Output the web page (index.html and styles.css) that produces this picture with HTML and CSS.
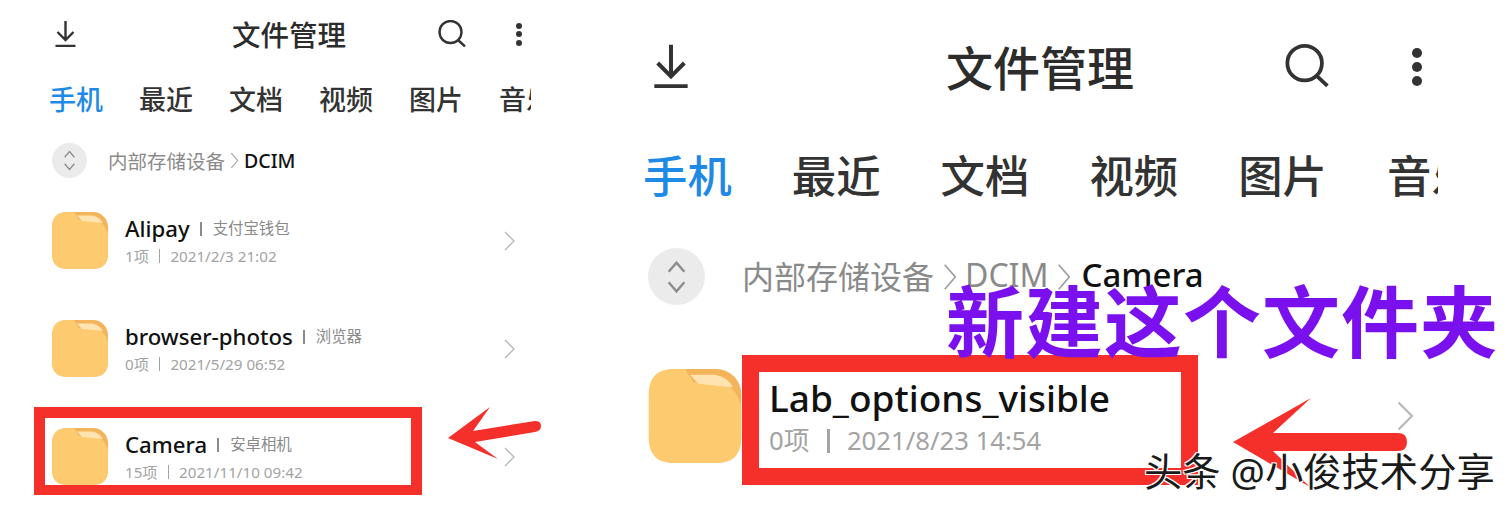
FILE: index.html
```html
<!DOCTYPE html>
<html lang="zh-CN">
<head>
  <meta charset="UTF-8" />
  <title>文件管理</title>
  <link rel="stylesheet" href="styles.css">
</head>
<body>
  <div class="page">
    <!-- left phone shot -->
    <section class="panel panel-small">
      <header class="top">
        <svg class="icon-download" viewBox="0 0 20 27"><path d="M10 1v18M2 12l8 8 8-8M0 26h20"/></svg>
        <h1 class="title">文件管理</h1>
        <svg class="icon-search" viewBox="0 0 28 27"><circle cx="12.5" cy="12" r="11"/><path d="M20 20l7 6.5"/></svg>
        <div class="dots"><i></i><i></i><i></i></div>
      </header>
      <nav class="tabs">
        <span class="tab active">手机</span><span class="tab">最近</span><span class="tab">文档</span><span class="tab">视频</span><span class="tab">图片</span><span class="tab">音乐</span>
      </nav>
      <div class="crumbs">
        <span class="crumb-btn"><svg viewBox="0 0 16 26"><path d="M2 9l6-7 6 7M2 17l6 7 6-7"/></svg></span>
        <span class="crumb">内部存储设备</span>
        <svg class="crumb-sep" viewBox="0 0 8 16"><path d="M1 1l6 7-6 7"/></svg>
        <span class="crumb-now">DCIM</span>
      </div>
      <ul class="rows">
        <li class="row">
          <svg class="folder" viewBox="0 0 56 57"><use href="#folder-shape"/></svg>
          <div class="info">
            <div class="name">Alipay<span class="bar"></span><span class="alias">支付宝钱包</span></div>
            <div class="meta">1项<span class="bar"></span>2021/2/3 21:02</div>
          </div>
          <svg class="chevron" viewBox="0 0 12 20"><path d="M1 1l9 9-9 9"/></svg>
        </li>
        <li class="row">
          <svg class="folder" viewBox="0 0 56 57"><use href="#folder-shape"/></svg>
          <div class="info">
            <div class="name">browser-photos<span class="bar"></span><span class="alias">浏览器</span></div>
            <div class="meta">0项<span class="bar"></span>2021/5/29 06:52</div>
          </div>
          <svg class="chevron" viewBox="0 0 12 20"><path d="M1 1l9 9-9 9"/></svg>
        </li>
        <li class="row">
          <svg class="folder" viewBox="0 0 56 57"><use href="#folder-shape"/></svg>
          <div class="info">
            <div class="name">Camera<span class="bar"></span><span class="alias">安卓相机</span></div>
            <div class="meta">15项<span class="bar"></span>2021/11/10 09:42</div>
          </div>
          <svg class="chevron" viewBox="0 0 12 20"><path d="M1 1l9 9-9 9"/></svg>
        </li>
      </ul>
    </section>

    <!-- right phone shot, same screen one folder deeper -->
    <section class="panel panel-large">
      <header class="top">
        <svg class="icon-download" viewBox="0 0 20 27"><path d="M10 1v18M2 12l8 8 8-8M0 26h20"/></svg>
        <h1 class="title">文件管理</h1>
        <svg class="icon-search" viewBox="0 0 28 27"><circle cx="12.5" cy="12" r="11"/><path d="M20 20l7 6.5"/></svg>
        <div class="dots"><i></i><i></i><i></i></div>
      </header>
      <nav class="tabs">
        <span class="tab active">手机</span><span class="tab">最近</span><span class="tab">文档</span><span class="tab">视频</span><span class="tab">图片</span><span class="tab">音乐</span>
      </nav>
      <div class="crumbs">
        <span class="crumb-btn"><svg viewBox="0 0 16 26"><path d="M2 9l6-7 6 7M2 17l6 7 6-7"/></svg></span>
        <span class="crumb">内部存储设备</span>
        <svg class="crumb-sep" viewBox="0 0 8 16"><path d="M1 1l6 7-6 7"/></svg>
        <span class="crumb">DCIM</span>
        <svg class="crumb-sep" viewBox="0 0 8 16"><path d="M1 1l6 7-6 7"/></svg>
        <span class="crumb-now">Camera</span>
      </div>
      <ul class="rows">
        <li class="row">
          <svg class="folder" viewBox="0 0 56 57"><use href="#folder-shape"/></svg>
          <div class="info">
            <div class="name">Lab_options_visible</div>
            <div class="meta">0项<span class="bar"></span>2021/8/23 14:54</div>
          </div>
          <svg class="chevron" viewBox="0 0 12 20"><path d="M1 1l9 9-9 9"/></svg>
        </li>
      </ul>
    </section>

    <!-- red marks and captions drawn on top of the shots -->
    <div class="mark mark-left"></div>
    <div class="mark mark-right"></div>
    <svg class="arrows" viewBox="0 0 1512 510">
      <path d="M448 438L490 407L473 431L535 421Q541 421 541 426Q541 431 535 432L475 442L498 459Z"/>
      <path d="M1233 442L1311 398L1273 433H1398Q1407 433 1407 442Q1407 451 1398 451H1273L1310 487Z"/>
    </svg>
    <div class="caption">新建这个文件夹</div>
    <div class="watermark">头条 @小俊技术分享</div>
  </div>

  <svg class="defs">
    <defs>
      <g id="folder-shape">
        <rect width="56" height="57" rx="15" fill="#f3b45a"/>
        <path d="M15 0H22L27 8L46 9Q53 12 56 22V42Q56 57 41 57H15Q0 57 0 42V15Q0 0 15 0Z" fill="#fdca70"/>
        <path d="M25 3.5H40Q48 5 51 11L30 9Z" fill="#ffe3b0"/>
      </g>
    </defs>
  </svg>
</body>
</html>
```

FILE: styles.css
```css
* {
  box-sizing: border-box;
}

html, body {
  margin: 0;
  padding: 0;
  background: #fff;
}

body {
  font-family: "Noto Sans", "Noto Sans CJK SC", sans-serif;
  color: #222;
}

.page {
  position: relative;
  display: flex;
  width: 1512px;
  height: 510px;
  overflow: hidden;
}

.defs {
  display: none;
}

.panel svg {
  fill: none;
  stroke: #333;
  flex: none;
}

.top {
  display: flex;
  align-items: center;
}

.title {
  margin: 0;
  font-weight: 500;
  color: #2c2c2c;
  white-space: nowrap;
}

.dots {
  display: flex;
  flex-direction: column;
  justify-content: space-between;
}

.dots i {
  display: block;
  background: #333;
  border-radius: 50%;
}

.tabs {
  display: flex;
  align-items: center;
  overflow: hidden;
  white-space: nowrap;
  font-weight: 500;
  color: #333;
}

.tab {
  flex: none;
}

.tab.active {
  color: #1f8ae6;
}

.crumbs {
  display: flex;
  align-items: center;
  white-space: nowrap;
}

.crumb-btn {
  display: flex;
  align-items: center;
  justify-content: center;
  background: #ebebeb;
  border-radius: 50%;
  flex: none;
}

.panel .crumb-btn svg {
  stroke: #8c8c8c;
}

.crumb {
  color: #8a8a8a;
}

.panel .crumb-sep {
  stroke: #a0a0a0;
}

.crumb-now {
  color: #111;
  font-weight: 500;
}

.rows {
  list-style: none;
  margin: 0;
  padding: 0;
  display: flex;
  flex-direction: column;
}

.row {
  display: flex;
  align-items: center;
}

.panel .folder {
  stroke: none;
}

.info {
  flex: 1;
  min-width: 0;
}

.name {
  display: flex;
  align-items: center;
  color: #111;
  font-weight: 500;
  white-space: nowrap;
}

.alias {
  color: #8a8a8a;
  font-weight: 400;
}

.meta {
  display: flex;
  align-items: center;
  color: #a3a3a3;
  white-space: nowrap;
}

.bar {
  display: inline-block;
  background: #8a8a8a;
}

.panel .chevron {
  stroke: #b5b5b5;
}

/* left shot */
.panel-small {
  width: 620px;
  padding-left: 52px;
}

.panel-small .top {
  height: 66px;
}

.panel-small .icon-download {
  width: 21px;
  height: 27px;
  margin-left: 3px;
  stroke-width: 2.4;
}

.panel-small .title {
  margin-left: 156px;
  width: 206px;
  font-size: 28.5px;
}

.panel-small .icon-search {
  width: 28px;
  height: 27px;
  stroke-width: 2.4;
}

.panel-small .dots {
  width: 6px;
  height: 23px;
  margin-left: 50px;
  margin-top: 2px;
}

.panel-small .dots i {
  width: 6px;
  height: 6px;
}

.panel-small .tabs {
  width: 482px;
  height: 60px;
  margin: 2px 0 0 -3px;
  gap: 36px;
  font-size: 27px;
}

.panel-small .crumbs {
  height: 64px;
  font-size: 19.5px;
}

.panel-small .crumb-btn {
  width: 35px;
  height: 35px;
  margin-right: 21px;
}

.panel-small .crumb-btn svg {
  width: 13px;
  height: 21px;
  stroke-width: 1.6;
}

.panel-small .crumb-sep {
  width: 9px;
  height: 17px;
  margin: 0 5px;
  stroke-width: 1;
}

.panel-small .rows {
  margin-top: 20px;
  gap: 51px;
  width: 464px;
}

.panel-small .row {
  height: 57px;
}

.panel-small .folder {
  width: 56px;
  height: 57px;
  margin-right: 17px;
}

.panel-small .name {
  font-size: 22.2px;
  line-height: 30px;
}

.panel-small .alias {
  font-size: 15.4px;
}

.panel-small .name .bar {
  width: 2px;
  height: 14px;
  margin: 0 11px 0 10px;
}

.panel-small .meta {
  margin-top: 1px;
  font-size: 15.2px;
  line-height: 22px;
}

.panel-small .meta .bar {
  width: 1.5px;
  height: 14px;
  margin: 0 10px;
  background: #a3a3a3;
}

.panel-small .chevron {
  width: 12px;
  height: 20px;
  stroke-width: 1.3;
}

/* right shot */
.panel-large {
  width: 892px;
  padding-left: 28px;
}

.panel-large .top {
  height: 130px;
}

.panel-large .icon-download {
  width: 34px;
  height: 45px;
  margin-left: 6px;
  stroke-width: 2.4;
}

.panel-large .title {
  margin-left: 258px;
  width: 339px;
  font-size: 47px;
}

.panel-large .icon-search {
  width: 44px;
  height: 45px;
  stroke-width: 2.4;
}

.panel-large .dots {
  width: 10px;
  height: 38px;
  margin-left: 83px;
  margin-top: 3px;
}

.panel-large .dots i {
  width: 10px;
  height: 10px;
}

.panel-large .tabs {
  width: 795px;
  height: 80px;
  margin: 3px 0 0 -5px;
  gap: 60px;
  font-size: 44.4px;
}

.panel-large .crumbs {
  height: 57px;
  margin-top: 35px;
  font-size: 32px;
}

.panel-large .crumb,
.panel-large .crumb-now {
  margin-bottom: 4px;
}

.panel-large .crumb-now {
  margin-left: 2px;
  font-size: 33px;
}

.panel-large .crumb-btn {
  width: 57px;
  height: 57px;
  margin-right: 37px;
}

.panel-large .crumb-btn svg {
  width: 21px;
  height: 34px;
  stroke-width: 1.8;
}

.panel-large .crumb-sep {
  width: 14px;
  height: 28px;
  margin: 0 8.5px;
  stroke-width: 1;
}

.panel-large .rows {
  margin-top: 64px;
  width: 767px;
}

.panel-large .row {
  height: 93px;
}

.panel-large .folder {
  width: 94px;
  height: 94px;
  margin-right: 27px;
}

.panel-large .name {
  font-size: 37px;
  line-height: 48px;
}

.panel-large .meta {
  margin-top: 2px;
  font-size: 25.7px;
  line-height: 34px;
}

.panel-large .meta .bar {
  width: 2.5px;
  height: 24px;
  margin: 0 17px 0 18px;
  background: #a3a3a3;
}

.panel-large .chevron {
  width: 18px;
  height: 30px;
  stroke-width: 1.3;
}

/* annotations */
.mark {
  position: absolute;
  border-style: solid;
  border-color: #f5302a;
}

.mark-left {
  left: 34px;
  top: 407px;
  width: 388px;
  height: 88px;
  border-width: 11px 11px 10px 11px;
}

.mark-right {
  left: 742px;
  top: 355px;
  width: 456px;
  height: 130px;
  border-width: 17px;
}

.arrows {
  position: absolute;
  left: 0;
  top: 0;
  width: 1512px;
  height: 510px;
  fill: #f5302a;
}

.caption {
  position: absolute;
  left: 946px;
  top: 272px;
  font-size: 78px;
  line-height: 100px;
  font-weight: 700;
  color: #7a10ee;
  letter-spacing: 1px;
  white-space: nowrap;
}

.watermark {
  position: absolute;
  left: 1144px;
  top: 448px;
  font-size: 38.3px;
  line-height: 46px;
  color: #1a1a1a;
  white-space: nowrap;
  text-shadow: 1px 1px 0 #fff, -1px -1px 0 #fff, 1px -1px 0 #fff, -1px 1px 0 #fff;
}
```
